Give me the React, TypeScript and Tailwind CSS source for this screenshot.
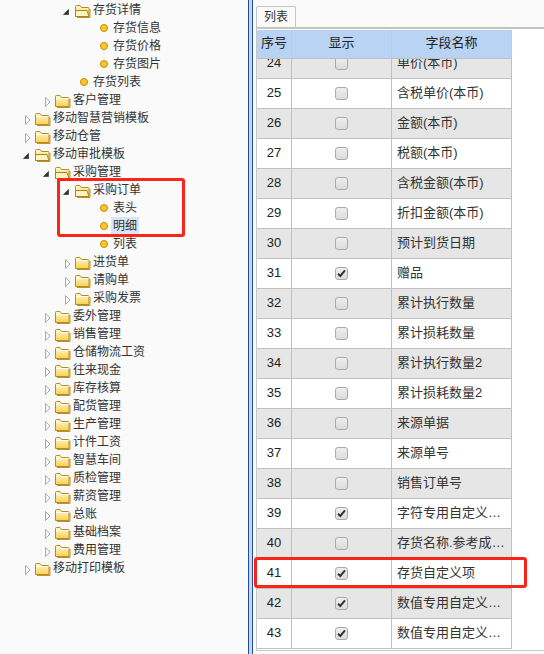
const TREE_ROWS: { label: string; level: number; kind: 'open' | 'closed' | 'leaf'; selected?: boolean }[] = [
  { label: '存货详情', level: 2, kind: 'open' },
  { label: '存货信息', level: 3, kind: 'leaf' },
  { label: '存货价格', level: 3, kind: 'leaf' },
  { label: '存货图片', level: 3, kind: 'leaf' },
  { label: '存货列表', level: 2, kind: 'leaf' },
  { label: '客户管理', level: 1, kind: 'closed' },
  { label: '移动智慧营销模板', level: 0, kind: 'closed' },
  { label: '移动仓管', level: 0, kind: 'closed' },
  { label: '移动审批模板', level: 0, kind: 'open' },
  { label: '采购管理', level: 1, kind: 'open' },
  { label: '采购订单', level: 2, kind: 'open' },
  { label: '表头', level: 3, kind: 'leaf' },
  { label: '明细', level: 3, kind: 'leaf', selected: true },
  { label: '列表', level: 3, kind: 'leaf' },
  { label: '进货单', level: 2, kind: 'closed' },
  { label: '请购单', level: 2, kind: 'closed' },
  { label: '采购发票', level: 2, kind: 'closed' },
  { label: '委外管理', level: 1, kind: 'closed' },
  { label: '销售管理', level: 1, kind: 'closed' },
  { label: '仓储物流工资', level: 1, kind: 'closed' },
  { label: '往来现金', level: 1, kind: 'closed' },
  { label: '库存核算', level: 1, kind: 'closed' },
  { label: '配货管理', level: 1, kind: 'closed' },
  { label: '生产管理', level: 1, kind: 'closed' },
  { label: '计件工资', level: 1, kind: 'closed' },
  { label: '智慧车间', level: 1, kind: 'closed' },
  { label: '质检管理', level: 1, kind: 'closed' },
  { label: '薪资管理', level: 1, kind: 'closed' },
  { label: '总账', level: 1, kind: 'closed' },
  { label: '基础档案', level: 1, kind: 'closed' },
  { label: '费用管理', level: 1, kind: 'closed' },
  { label: '移动打印模板', level: 0, kind: 'closed' },
];

const FIELD_ROWS: [number, string, boolean][] = [
  [24, '单价(本币)', false],
  [25, '含税单价(本币)', false],
  [26, '金额(本币)', false],
  [27, '税额(本币)', false],
  [28, '含税金额(本币)', false],
  [29, '折扣金额(本币)', false],
  [30, '预计到货日期', false],
  [31, '赠品', true],
  [32, '累计执行数量', false],
  [33, '累计损耗数量', false],
  [34, '累计执行数量2', false],
  [35, '累计损耗数量2', false],
  [36, '来源单据', false],
  [37, '来源单号', false],
  [38, '销售订单号', false],
  [39, '字符专用自定义项1', true],
  [40, '存货名称.参考成本价', false],
  [41, '存货自定义项', true],
  [42, '数值专用自定义项1', true],
  [43, '数值专用自定义项2', true],
];

const FONT = "font-['Liberation_Sans','Noto_Sans_CJK_SC',sans-serif]";

function Arrow({ open }: { open: boolean }) {
  return (
    <svg width="10" height="12" viewBox="0 0 10 12" className="shrink-0 mt-[4px]">
      {open ? (
        <path d="M0.5 8.5 L5.5 3.5 L5.5 8.5 Z" fill="#333" stroke="#555" strokeWidth="1" />
      ) : (
        <path d="M2.5 1.5 L7 6 L2.5 10.5 Z" fill="#fff" stroke="#a8a8a8" strokeWidth="1" />
      )}
    </svg>
  );
}

function Folder({ open }: { open: boolean }) {
  return (
    <svg width="16" height="14" viewBox="0 0 16 14" className="shrink-0 mt-[4px]">
      <defs>
        <linearGradient id="folderFill" x1="0" y1="0" x2="0" y2="1">
          <stop offset="0" stopColor="#fff8d2" />
          <stop offset="1" stopColor="#fcd04e" />
        </linearGradient>
      </defs>
      <path d="M0.5 11.5 V1.5 Q0.5 0.5 1.5 0.5 H5 L6.5 2.5 H13 Q14 2.5 14 3.5 V11.5 Z" fill="url(#folderFill)" stroke="#b08c2c" strokeWidth="1" />
      {open ? (
        <path d="M0.5 11.5 L0.5 5.5 H12 L14 11.5 Z" fill="#fff3c0" stroke="#a88420" strokeWidth="1" />
      ) : (
        <path d="M1 3.5 H13.5" stroke="#fff" strokeWidth="1" />
      )}
      <path d="M15 4 V12.5 H2" fill="none" stroke="#b8922e" strokeWidth="1" />
    </svg>
  );
}

function LeafDot() {
  return (
    <span className="w-[8px] h-[8px] rounded-full bg-[#ffc81e] border border-[#c08a10] shrink-0" />
  );
}

function TreeRow({ label, level, kind, selected }: (typeof TREE_ROWS)[number]) {
  return (
    <div className="h-[18px] flex items-center whitespace-nowrap">
      {level === 0 && <span className="w-[23px] shrink-0" />}
      {level === 1 && <span className="w-[43px] shrink-0" />}
      {level === 2 && <span className="w-[63px] shrink-0" />}
      {level === 3 && <span className="w-[83px] shrink-0" />}
      {kind === 'leaf' ? (
        <>
          <span className="w-[17px] shrink-0" />
          <LeafDot />
          <span className={`ml-[3px] px-[2px] text-[12px] leading-[18px] text-[#333] ${selected ? 'bg-[#d6e6f8]' : ''}`}>{label}</span>
        </>
      ) : (
        <>
          <Arrow open={kind === 'open'} />
          <span className="w-[2px] shrink-0" />
          <Folder open={kind === 'open'} />
          <span className="px-[2px] text-[12px] leading-[18px] text-[#333]">{label}</span>
        </>
      )}
    </div>
  );
}

function CheckCell({ checked }: { checked: boolean }) {
  return (
    <span className="w-[13px] h-[13px] rounded-[3px] border border-[#aaaaaa] bg-gradient-to-b from-[#eeeeee] to-[#dcdcdc] flex items-center justify-center">
      {checked && (
        <svg width="9" height="9" viewBox="0 0 9 9">
          <path d="M1 4.8 L3.3 7 L8 1.4" fill="none" stroke="#333" strokeWidth="2" />
        </svg>
      )}
    </span>
  );
}

export default function App() {
  return (
    <div className={`relative w-[544px] h-[654px] overflow-hidden bg-[#fafafa] flex ${FONT}`}>
      {/* Module tree */}
      <div className="w-[248px] h-full shrink-0 bg-[#fafafa] pt-[1px] overflow-hidden">
        {TREE_ROWS.map((row, i) => (
          <TreeRow key={i} {...row} />
        ))}
      </div>

      {/* Splitter */}
      <div className="w-[1px] h-full bg-[#1f4ea1] shrink-0" />
      <div className="w-[3px] h-full bg-[#c5d8f0] shrink-0" />
      <div className="w-[1px] h-full bg-[#1f4ea1] shrink-0" />

      {/* Field list */}
      <div className="flex-1 h-full bg-[#fafafa] pl-[3px] flex flex-col">
        <div className="h-[27px] pt-[7px] shrink-0 flex items-end">
          <span className="h-[21px] w-[40px] flex items-center justify-center bg-[#fafafa] border border-b-0 border-[#c4c4c4] rounded-t-[2px] text-[12px] text-[#333]">
            列表
          </span>
        </div>
        <div className="h-[2px] bg-[#c4c4c4] shrink-0" />
        <div className="h-[622px] border-l border-b border-[#c8c8c8] pt-[1px] bg-white overflow-hidden">
          <div className="w-[255px]">
            <div className="relative z-10 h-[29px] bg-[#b8d3f3] border-b border-[#c0c0c0] flex text-[13px] text-[#222] text-center leading-[26px]">
              <span className="w-[35px] border-r border-[#c9c9c9]">序号</span>
              <span className="w-[100px] border-r border-[#c9c9c9]">显示</span>
              <span className="w-[120px] border-r border-[#c9c9c9]">字段名称</span>
            </div>
            <div className="-mt-[10px]">
              {FIELD_ROWS.map(([no, name, checked]) => (
                <div key={no} className={`h-[30px] flex border-b border-[#c0c0c0] text-[13px] ${no % 2 === 0 ? 'bg-[#e6e6e6]' : 'bg-white'}`}>
                  <span className="w-[35px] border-r border-[#c0c0c0] flex items-center justify-center text-[#222] pb-[1px]">{no}</span>
                  <span className="w-[100px] border-r border-[#c0c0c0] flex items-center justify-center">
                    <CheckCell checked={checked} />
                  </span>
                  <span className="w-[120px] border-r border-[#c0c0c0] pl-[5px] pr-[5px] leading-[27px] text-[#333] truncate">{name}</span>
                </div>
              ))}
            </div>
          </div>
        </div>
      </div>

      {/* Red annotation boxes */}
      <div className="absolute left-[57px] top-[178px] w-[128px] h-[59px] border-[3px] border-[#fa2418] rounded-[3px]" />
      <div className="absolute left-[254px] top-[557px] w-[273px] h-[31px] border-[3px] border-[#fa2418] rounded-[3px]" />
    </div>
  );
}
